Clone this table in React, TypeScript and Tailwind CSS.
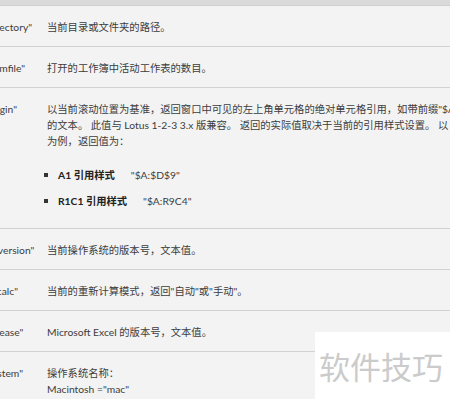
import React from "react";

type Row = {
  key: string;
  desc: React.ReactNode;
};

const font = {
  fontFamily: '"Lato", "Noto Sans CJK SC", sans-serif',
};

const rows: Row[] = [
  { key: '"directory"', desc: <p>当前目录或文件夹的路径。</p> },
  { key: '"numfile"', desc: <p>打开的工作簿中活动工作表的数目。</p> },
  {
    key: '"origin"',
    desc: (
      <div>
        <p className="whitespace-nowrap">
          以当前滚动位置为基准，返回窗口中可见的左上角单元格的绝对单元格引用，如带前缀"$A:"
        </p>
        <p className="whitespace-nowrap">
          的文本。 此值与 Lotus 1-2-3 3.x 版兼容。 返回的实际值取决于当前的引用样式设置。 以 D9
        </p>
        <p className="whitespace-nowrap">为例，返回值为：</p>
        <ul className="mt-[18px] mb-[8px] flex flex-col gap-[10px]">
          <li className="flex items-center -ml-[3px]">
            <span className="w-[4px] h-[4px] bg-[#333] mr-[10px]" />
            <b className="font-bold text-[#222]">A1 引用样式</b>
            <span className="ml-[16px]">"$A:$D$9"</span>
          </li>
          <li className="flex items-center -ml-[3px]">
            <span className="w-[4px] h-[4px] bg-[#333] mr-[10px]" />
            <b className="font-bold text-[#222]">R1C1 引用样式</b>
            <span className="ml-[16px]">"$A:R9C4"</span>
          </li>
        </ul>
      </div>
    ),
  },
  { key: '"osversion"', desc: <p>当前操作系统的版本号，文本值。</p> },
  { key: '"recalc"', desc: <p>当前的重新计算模式，返回"自动"或"手动"。</p> },
  { key: '"release"', desc: <p>Microsoft Excel 的版本号，文本值。</p> },
  {
    key: '"system"',
    desc: (
      <div>
        <p>操作系统名称：</p>
        <p>Macintosh ="mac"</p>
      </div>
    ),
  },
];

export default function App() {
  return (
    <div
      className="relative w-[450px] h-[399px] overflow-hidden bg-[#f3f3f3] text-[#3c3c3c] text-[10.3px] leading-4"
      style={font}
    >
      <div className="h-[6px] bg-[#dadada] border-b border-[#cfcfcf]" />
      <div className="-ml-[16px] w-[620px]">
        {rows.map((r) => (
          <div
            key={r.key}
            className="grid grid-cols-[63px_1fr] pt-[13px] pb-[11px] border-b border-[#d2d2d2]"
          >
            <div className="whitespace-nowrap">{r.key}</div>
            <div>{r.desc}</div>
          </div>
        ))}
      </div>

      {/* site watermark */}
      <div className="absolute left-[315px] top-[332px] w-[135px] h-[67px] bg-white flex items-center pl-[4px]">
        <span
          className="text-[31px] leading-none text-[#cbcbcb] whitespace-nowrap"
          style={{ fontFamily: '"Noto Sans CJK SC", sans-serif' }}
        >
          软件技巧
        </span>
      </div>
    </div>
  );
}
